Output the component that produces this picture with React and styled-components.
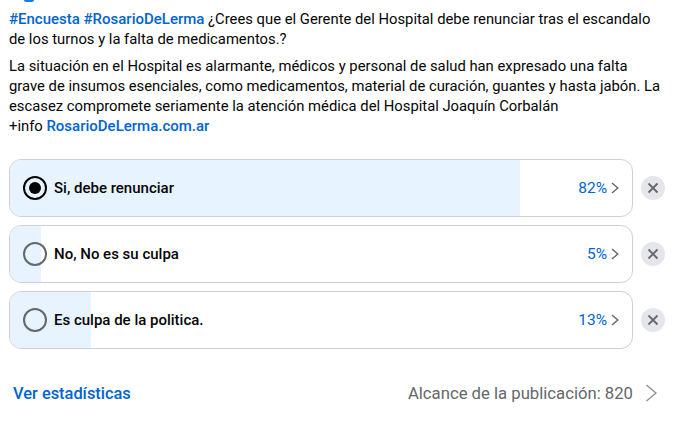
import React from "react"
import styled, { createGlobalStyle } from "styled-components"

const GlobalStyle = createGlobalStyle`
  html, body {
    margin: 0;
    padding: 0;
    background: #fff;
  }
  body {
    font-family: Roboto, "Open Sans", sans-serif;
    color: #050505;
  }
`

const Post = styled.div`
  position: relative;
  width: 673px;
  height: 423px;
  overflow: hidden;
  box-sizing: border-box;
  padding: 9px 0 0 9px;
`

const AvatarEdge = styled.div`
  position: absolute;
  left: 24px;
  top: 0;
  width: 10px;
  height: 2px;
  border-radius: 0 0 5px 5px;
  background: #1877f2;
`

const Paragraph = styled.p`
  margin: 0 0 7px;
  width: 652px;
  font-size: 14.8px;
  line-height: 20px;
`

const Tag = styled.span`
  color: #0064d1;
  font-size: 15px;
  font-weight: 500;
`

const Options = styled.div`
  display: flex;
  flex-direction: column;
  gap: 8px;
  margin-top: 23px;
`

const OptionRow = styled.div`
  display: flex;
  align-items: center;
  gap: 8px;
`

const OptionCard = styled.div`
  position: relative;
  width: 624px;
  height: 58px;
  box-sizing: border-box;
  border: 1px solid #ced0d4;
  border-radius: 12px;
  overflow: hidden;
  display: flex;
  align-items: center;
  padding: 0 12px 0 13px;
`

const Fill = styled.div`
  position: absolute;
  left: 0;
  top: 0;
  bottom: 0;
  background: #e7f3ff;
`

const Radio = styled.span`
  position: relative;
  width: 24px;
  height: 24px;
  box-sizing: border-box;
  flex: none;
  border-radius: 50%;
  border: 2px solid ${(p) => (p.$checked ? "#050505" : "#65676b")};
  display: flex;
  align-items: center;
  justify-content: center;
  &::after {
    content: "";
    display: ${(p) => (p.$checked ? "block" : "none")};
    width: 12px;
    height: 12px;
    border-radius: 50%;
    background: #050505;
  }
`

const Label = styled.span`
  position: relative;
  margin-left: 7px;
  flex: 1;
  font-size: 15px;
  font-weight: 500;
`

const Percent = styled.span`
  position: relative;
  font-size: 15.5px;
  color: #0064d1;
`

const Chevron = styled.svg`
  position: relative;
  flex: none;
  margin-left: 2px;
  display: block;
`

const Remove = styled.button`
  width: 24px;
  height: 24px;
  flex: none;
  padding: 0;
  border: none;
  border-radius: 50%;
  background: #e4e6eb;
  display: flex;
  align-items: center;
  justify-content: center;
`

const Footer = styled.div`
  display: flex;
  align-items: center;
  justify-content: space-between;
  width: 650px;
  margin-top: 34px;
  padding-left: 4px;
  box-sizing: border-box;
`

const Stats = styled.span`
  font-size: 16.4px;
  font-weight: 500;
  color: #0064d1;
`

const Reach = styled.span`
  display: flex;
  align-items: center;
  gap: 12px;
  font-size: 16.7px;
  color: #65676b;
`

const options = [
  { label: "Si, debe renunciar", pct: 82, checked: true },
  { label: "No, No es su culpa", pct: 5 },
  { label: "Es culpa de la politica.", pct: 13 },
]

export default function App() {
  return (
    <Post>
      <GlobalStyle />
      <AvatarEdge />
      <Paragraph>
        <Tag>#Encuesta</Tag> <Tag>#RosarioDeLerma</Tag> ¿Crees que el Gerente del Hospital debe
        renunciar tras el escandalo de los turnos y la falta de medicamentos.?
      </Paragraph>
      <Paragraph>
        La situación en el Hospital es alarmante, médicos y personal de salud han expresado una
        falta grave de insumos esenciales, como medicamentos, material de curación, guantes y
        hasta jabón. La escasez compromete seriamente la atención médica del Hospital Joaquín
        Corbalán
        <br />
        +info <Tag>RosarioDeLerma.com.ar</Tag>
      </Paragraph>
      <Options>
        {options.map((o) => (
          <OptionRow key={o.label}>
            <OptionCard>
              <Fill style={{ width: `${o.pct}%` }} />
              <Radio $checked={o.checked} />
              <Label>{o.label}</Label>
              <Percent>{o.pct}%</Percent>
              <Chevron width="11" height="12" viewBox="0 0 11 12" fill="none">
                <path d="M3 1 8.8 6 3 11" stroke="#65676b" strokeWidth="1.4" />
              </Chevron>
            </OptionCard>
            <Remove aria-label="Quitar">
              <svg width="12" height="12" viewBox="0 0 12 12" fill="none">
                <path d="M1.5 1.5l9 9M10.5 1.5l-9 9" stroke="#65676b" strokeWidth="1.8" />
              </svg>
            </Remove>
          </OptionRow>
        ))}
      </Options>
      <Footer>
        <Stats>Ver estadísticas</Stats>
        <Reach>
          Alcance de la publicación: 820
          <svg width="14" height="20" viewBox="0 0 14 20" fill="none">
            <path d="M1.5 2l9.5 8-9.5 8" stroke="#8a8d91" strokeWidth="1.3" />
          </svg>
        </Reach>
      </Footer>
    </Post>
  )
}
